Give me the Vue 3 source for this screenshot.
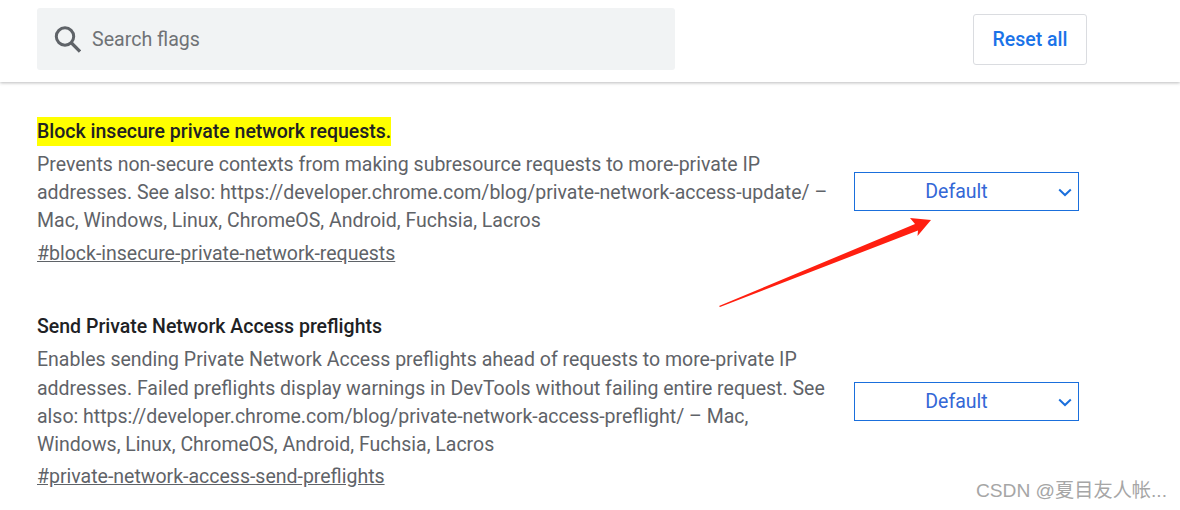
<script setup>
const flags = [
  {
    title: 'Block insecure private network requests.',
    highlight: true,
    lines: [
      'Prevents non-secure contexts from making subresource requests to more-private IP',
      'addresses. See also: https://developer.chrome.com/blog/private-network-access-update/ –',
      'Mac, Windows, Linux, ChromeOS, Android, Fuchsia, Lacros',
    ],
    link: '#block-insecure-private-network-requests',
  },
  {
    title: 'Send Private Network Access preflights',
    highlight: false,
    lines: [
      'Enables sending Private Network Access preflights ahead of requests to more-private IP',
      'addresses. Failed preflights display warnings in DevTools without failing entire request. See',
      'also: https://developer.chrome.com/blog/private-network-access-preflight/ – Mac,',
      'Windows, Linux, ChromeOS, Android, Fuchsia, Lacros',
    ],
    link: '#private-network-access-send-preflights',
  },
]
</script>

<template>
  <div class="page">
    <header class="top">
      <div class="search">
        <svg class="glass" viewBox="0 0 28 28" width="28" height="28">
          <circle cx="12" cy="11.500" r="8.700" fill="none" stroke="#5f6368" stroke-width="3" />
          <path d="M18.500 18 L27 26.500" stroke="#5f6368" stroke-width="3.200" fill="none" />
        </svg>
        <span class="placeholder">Search flags</span>
      </div>
      <button class="reset">Reset all</button>
    </header>
    <main class="list">
      <section v-for="f in flags" :key="f.link" class="flag">
        <div class="info">
          <h2 class="title"><span :class="{ hl: f.highlight }">{{ f.title }}</span></h2>
          <p class="desc"><span v-for="l in f.lines" :key="l" class="line">{{ l }}</span></p>
          <a class="link">{{ f.link }}</a>
        </div>
        <div class="select">
          <span class="value">Default</span>
          <svg class="chev" viewBox="0 0 14 9" width="14" height="9">
            <path d="M1.200 1.500 L7 7 L12.800 1.500" fill="none" stroke="#1a6fdc" stroke-width="2" />
          </svg>
        </div>
      </section>
    </main>
    <svg class="arrow" viewBox="0 0 1180 510" width="1180" height="510">
      <path d="M719 306 L720 307 L918 230.500 L917.500 236 L931 220 L910 218 L915 224 Z" fill="#ff1f10" />
    </svg>
    <div class="mark">CSDN @夏目友人帐...</div>
  </div>
</template>

<style scoped>
.page {
  position: relative;
  width: 1180px;
  height: 510px;
  overflow: hidden;
  background: #fff;
  font-family: Roboto, "Liberation Sans", sans-serif;
}
.top {
  box-sizing: border-box;
  height: 82px;
  padding: 8px 93px 0 37px;
  display: flex;
  justify-content: space-between;
  align-items: flex-start;
  box-shadow: 0 1px 3px rgba(60, 64, 67, 0.35);
}
.search {
  width: 638px;
  height: 62px;
  box-sizing: border-box;
  padding-left: 16px;
  display: flex;
  align-items: center;
  gap: 11px;
  background: #f1f3f4;
  border-radius: 3px;
}
.placeholder {
  font-size: 19.600px;
  color: #6f7276;
}
.reset {
  width: 114px;
  height: 51px;
  margin-top: 6px;
  background: #fff;
  border: 1px solid #dadce0;
  border-radius: 3px;
  color: #1a73e8;
  font: 500 19.500px Roboto, sans-serif;
}
.list {
  padding: 35px 101px 0 37px;
}
.flag {
  display: flex;
  justify-content: space-between;
  align-items: center;
  margin-bottom: 44.500px;
}
.info {
  width: 800px;
}
.title {
  margin: 0;
  font-size: 19.500px;
  font-weight: 500;
  line-height: 29px;
  color: #202124;
}
.hl {
  background: #ffff00;
  display: inline-block;
}
.desc {
  margin: 5px 0 0;
  font-size: 19.500px;
  line-height: 28.200px;
  color: #5f6368;
}
.line {
  display: block;
  white-space: nowrap;
}
.link {
  display: block;
  margin-top: 4px;
  font-size: 19.500px;
  line-height: 28.200px;
  color: #5f6368;
  text-decoration: underline;
}
.select {
  position: relative;
  box-sizing: border-box;
  width: 225px;
  height: 39px;
  margin-bottom: 1.500px;
  padding-right: 20px;
  border: 1px solid #1a6fdc;
  display: flex;
  align-items: center;
  justify-content: center;
  color: #3367d6;
  font-size: 19.500px;
}
.chev {
  position: absolute;
  right: 6px;
  top: 15px;
}
.arrow {
  position: absolute;
  left: 0;
  top: 0;
  pointer-events: none;
}
.mark {
  position: absolute;
  right: 13px;
  top: 475px;
  font-family: "Liberation Sans", "Noto Sans CJK SC", sans-serif;
  font-size: 19.200px;
  color: #a6a6a6;
}
</style>
